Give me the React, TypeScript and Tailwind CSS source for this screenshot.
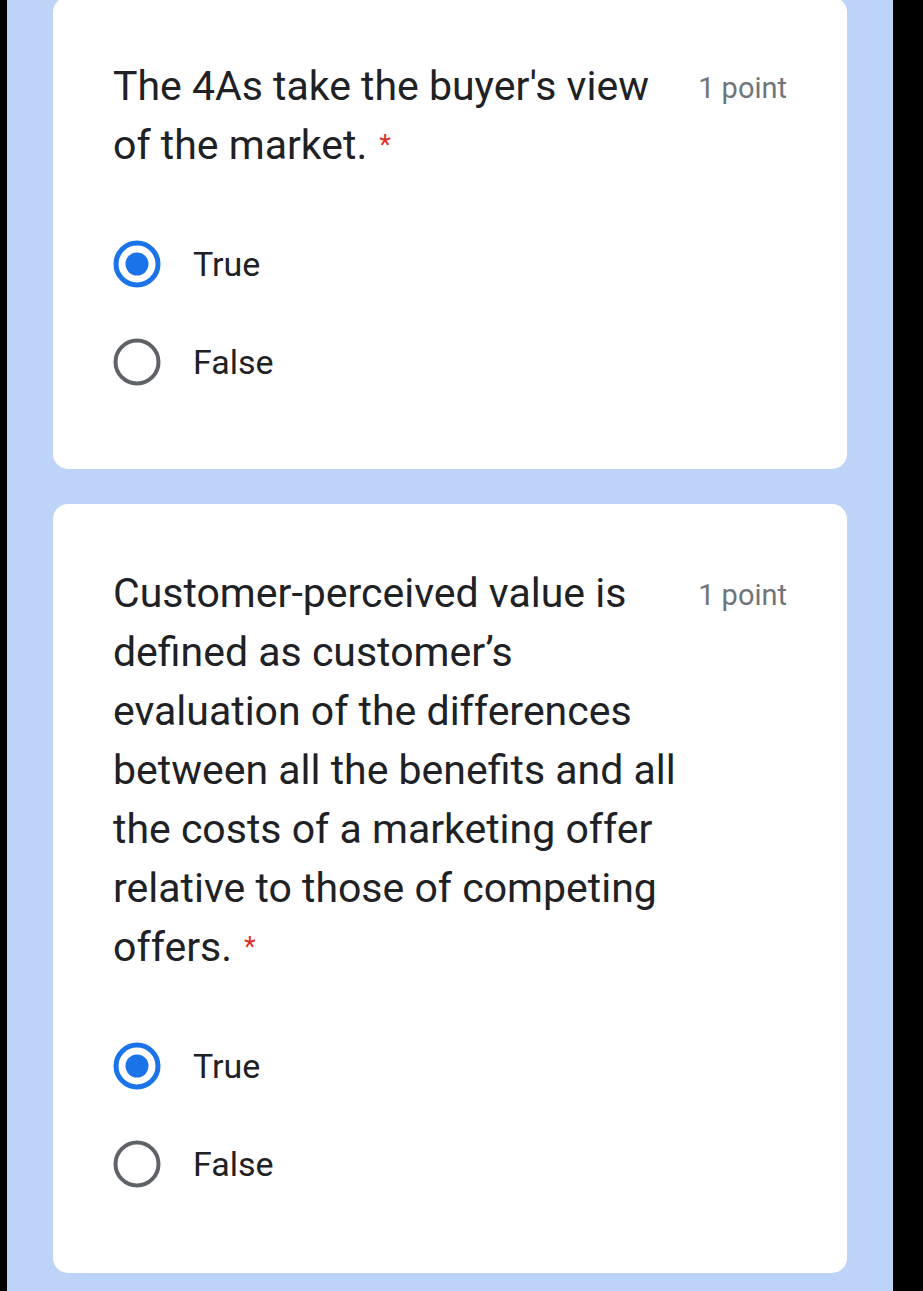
import React from "react";

interface Question {
  id: number;
  lines: string[];
  options: { label: string; checked: boolean }[];
}

const questions: Question[] = [
  {
    id: 1,
    lines: ["The 4As take the buyer's view", "of the market."],
    options: [
      { label: "True", checked: true },
      { label: "False", checked: false },
    ],
  },
  {
    id: 2,
    lines: [
      "Customer-perceived value is",
      "defined as customer\u2019s",
      "evaluation of the differences",
      "between all the benefits and all",
      "the costs of a marketing offer",
      "relative to those of competing",
      "offers.",
    ],
    options: [
      { label: "True", checked: true },
      { label: "False", checked: false },
    ],
  },
];

function Radio({ checked }: { checked: boolean }) {
  return checked ? (
    <svg width="48" height="48" viewBox="0 0 48 48">
      <circle cx="24" cy="24" r="21" fill="none" stroke="#1a73e8" strokeWidth="5" />
      <circle cx="24" cy="24" r="11.5" fill="#1a73e8" />
    </svg>
  ) : (
    <svg width="48" height="48" viewBox="0 0 48 48">
      <circle cx="24" cy="24" r="21.5" fill="none" stroke="#5f6368" strokeWidth="4" />
    </svg>
  );
}

function Card({ q, first }: { q: Question; first?: boolean }) {
  return (
    <div
      className={`bg-white rounded-[15px] px-[60px] pt-[60px] ${
        first ? "-mt-[3px] pb-[58px]" : "pb-[60px]"
      }`}
    >
      <div className="flex justify-between items-start">
        <div className="w-[575px] text-[41px] leading-[59px] text-[#202124]">
          {q.lines.map((line, i) => (
            <div key={i} className="whitespace-nowrap">
              {line}
              {i === q.lines.length - 1 && (
                <span className="text-[#d93025] text-[27px] align-top ml-[12px]">*</span>
              )}
            </div>
          ))}
        </div>
        <div className="text-[29px] leading-[59px] text-[#70757a] mt-[2px] whitespace-nowrap">
          1 point
        </div>
      </div>
      <div className="mt-[40px]">
        {q.options.map((opt) => (
          <div key={opt.label} className="h-[98px] flex items-center gap-[32px]">
            <Radio checked={opt.checked} />
            <span className="text-[34px] text-[#202124]">{opt.label}</span>
          </div>
        ))}
      </div>
    </div>
  );
}

export default function App() {
  return (
    <div
      className="w-[923px] h-[1291px] bg-black flex overflow-hidden"
      style={{ fontFamily: "Roboto, 'Noto Sans', sans-serif" }}
    >
      <div className="w-[7px] shrink-0" />
      <div className="w-[886px] bg-[#bdd3f8] px-[46px] flex flex-col gap-[35px]">
        {questions.map((q, i) => (
          <Card key={q.id} q={q} first={i === 0} />
        ))}
      </div>
    </div>
  );
}
